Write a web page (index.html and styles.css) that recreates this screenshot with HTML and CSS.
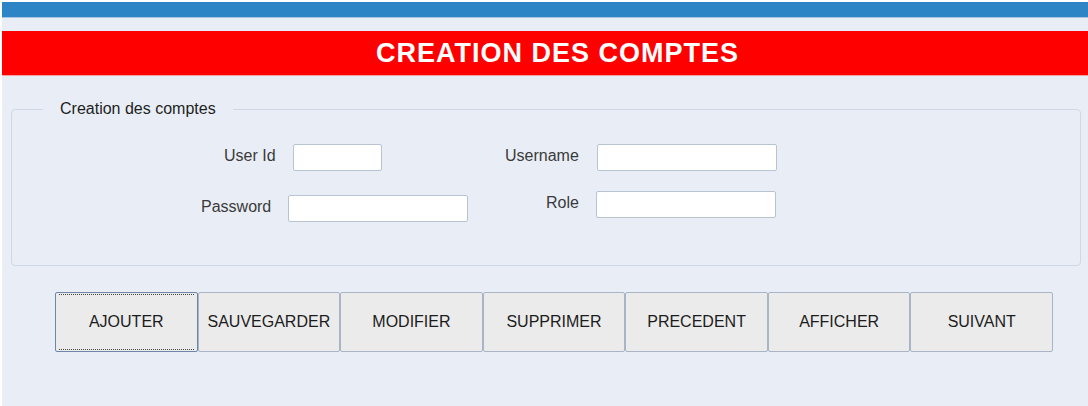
FILE: index.html
```html
<!DOCTYPE html>
<html lang="fr">
<head>
<meta charset="utf-8">
<title>Creation des comptes</title>
<link rel="stylesheet" href="styles.css">
</head>
<body>
<div class="app">
  <div class="topbar"></div>
  <div class="banner">CREATION DES COMPTES</div>
  <fieldset class="group">
    <legend class="group-title">Creation des comptes</legend>
    <div class="fields">
      <div class="col col-left">
        <div class="row row-userid">
          <label class="lbl">User Id</label>
          <input class="inp inp-short" type="text">
        </div>
        <div class="row row-password">
          <label class="lbl">Password</label>
          <input class="inp" type="text">
        </div>
      </div>
      <div class="col col-right">
        <div class="row row-username">
          <label class="lbl">Username</label>
          <input class="inp" type="text">
        </div>
        <div class="row row-role">
          <label class="lbl">Role</label>
          <input class="inp" type="text">
        </div>
      </div>
    </div>
  </fieldset>
  <div class="actions">
    <button class="btn btn-focus">AJOUTER</button>
    <button class="btn">SAUVEGARDER</button>
    <button class="btn">MODIFIER</button>
    <button class="btn">SUPPRIMER</button>
    <button class="btn">PRECEDENT</button>
    <button class="btn">AFFICHER</button>
    <button class="btn">SUIVANT</button>
  </div>
</div>
</body>
</html>
```
FILE: styles.css
```css
html {
  background: #ffffff;
}
body {
  margin: 0;
  font-family: "Liberation Sans", Arial, sans-serif;
}
.app {
  margin: 2px 0 0 2px;
  height: 404px;
  background: #e9eef6;
  overflow: hidden;
}
.topbar {
  height: 15px;
  background: #2e85c5;
  border-bottom: 1px solid #a9c5e2;
}
.banner {
  margin-top: 13px;
  height: 44px;
  background: #ff0000;
  color: #ffffff;
  font-weight: bold;
  font-size: 27px;
  letter-spacing: 1px;
  display: flex;
  align-items: center;
  justify-content: center;
  padding-left: 25px;
  border-bottom: 1px solid #f2a0a0;
}
.group {
  margin: 24px 7px 0 9px;
  padding: 0;
  height: 164px;
  border: 1px solid #cfd8e6;
  border-radius: 4px;
  min-width: 0;
}
.group-title {
  margin-left: 31px;
  padding: 0 17px;
  font-size: 16px;
  line-height: 18px;
  color: #1e1e1e;
}
.fields {
  display: flex;
  padding-top: 26px;
}
.col {
  display: flex;
  flex-direction: column;
}
.col-left {
  width: 480px;
}
.row {
  display: flex;
  align-items: center;
}
.lbl {
  font-size: 16px;
  color: #3a3a3a;
  padding-bottom: 3px;
}
.inp {
  box-sizing: border-box;
  width: 180px;
  height: 27px;
  margin: 0;
  padding: 0 4px;
  background: #ffffff;
  border: 1px solid #b9c4d3;
  border-radius: 2px;
  font-family: inherit;
  font-size: 14px;
}
.inp-short {
  width: 89px;
}
.row-userid {
  margin-left: 212px;
  gap: 17px;
}
.row-password {
  margin-left: 189px;
  margin-top: 24px;
  gap: 17px;
}
.row-username {
  margin-left: 13px;
  gap: 18px;
}
.row-role {
  margin-left: 54px;
  margin-top: 20px;
  gap: 17px;
}
.actions {
  display: grid;
  grid-template-columns: repeat(7, 1fr);
  width: 998px;
  margin: 26px 0 0 53px;
}
.btn {
  position: relative;
  height: 60px;
  margin: 0;
  padding: 0;
  background: #ebebeb;
  border: 1px solid #a9b5c6;
  border-radius: 2px;
  font-family: inherit;
  font-size: 16px;
  color: #1c1c1c;
}
.btn-focus {
  border-color: #6e86a8;
}
.btn-focus::before {
  content: "";
  position: absolute;
  left: 3px;
  right: 3px;
  top: 1px;
  bottom: 1px;
  border-top: 1px dotted #444444;
  border-bottom: 1px dotted #444444;
}
```
